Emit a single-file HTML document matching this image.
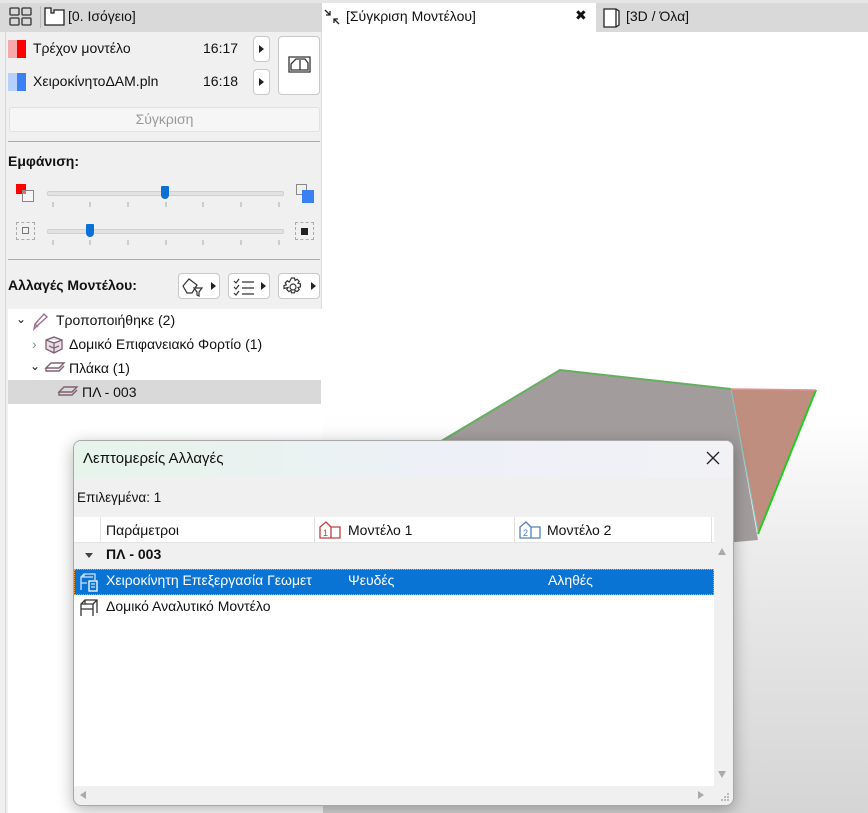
<!DOCTYPE html>
<html><head><meta charset="utf-8"><style>
*{box-sizing:border-box;margin:0;padding:0}
body{width:868px;height:813px;overflow:hidden;background:#fff;font-family:"Segoe UI","Liberation Sans","DejaVu Sans",sans-serif;font-size:14px;color:#111;position:relative}
.abs{position:absolute;white-space:nowrap}
.btn{position:absolute;background:#fff;border:1px solid #c8c8c8;border-radius:4px}
.tri{width:0;height:0;border-top:4px solid transparent;border-bottom:4px solid transparent;border-left:5px solid #222;position:absolute}
</style></head><body>
<div class="abs" style="left:0;top:0;width:868px;height:3px;background:#e6e6e6"></div>
<div class="abs" style="left:0;top:3px;width:322px;height:29px;background:#d9d9d9"></div>
<svg class="abs" style="left:9px;top:7px" width="24" height="20"><g fill="none" stroke="#333" stroke-width="1.3"><rect x="1" y="1" width="9" height="7" rx="1"/><rect x="13" y="1" width="9" height="7" rx="1"/><rect x="1" y="11" width="9" height="7" rx="1"/><rect x="13" y="11" width="9" height="7" rx="1"/></g></svg>
<div class="abs" style="left:40px;top:6px;width:1px;height:22px;background:#bbb"></div>
<svg class="abs" style="left:44px;top:7px" width="22" height="20"><path d="M1 1h6v5h3V3h10v15H1z" fill="#fff" stroke="#222" stroke-width="1.3"/></svg>
<div class="abs" style="left:68px;top:8px">[0. Ισόγειο]</div>
<div class="abs" style="left:322px;top:3px;width:274px;height:29px;background:#fff"></div>
<svg class="abs" style="left:323px;top:8px" width="18" height="18"><path d="M2 2l5 5M7 3v4H3M16 16l-5-5M11 15v-4h4" fill="none" stroke="#222" stroke-width="1.3"/></svg>
<div class="abs" style="left:346px;top:8px">[Σύγκριση Μοντέλου]</div>
<div class="abs" style="left:575px;top:7px;font-size:14px;font-weight:bold">✖</div>
<div class="abs" style="left:596px;top:3px;width:272px;height:29px;background:#d9d9d9"></div>
<svg class="abs" style="left:602px;top:7px" width="20" height="22"><path d="M2 2h12l3 2v14l-3 2H2z M14 2v18" fill="#fff" stroke="#222" stroke-width="1.3"/></svg>
<div class="abs" style="left:626px;top:8px">[3D / Όλα]</div>
<div class="abs" style="left:0;top:32px;width:322px;height:781px;background:#f0f0f0;border-right:1px solid #ddd"></div>
<div class="abs" style="left:5px;top:32px;width:1px;height:781px;background:#d6d6d6"></div>
<div class="abs" style="left:8px;top:40px;width:9px;height:18px;background:#f7a8a8"></div>
<div class="abs" style="left:17px;top:40px;width:9px;height:18px;background:#f00"></div>
<div class="abs" style="left:33px;top:40px">Τρέχον μοντέλο</div>
<div class="abs" style="left:203px;top:40px">16:17</div>
<div class="btn" style="left:253px;top:36px;width:17px;height:26px"><div class="tri" style="left:5px;top:8px"></div></div>
<div class="abs" style="left:8px;top:73px;width:9px;height:18px;background:#b5d0fb"></div>
<div class="abs" style="left:17px;top:73px;width:9px;height:18px;background:#3a7ff5"></div>
<div class="abs" style="left:33px;top:73px">ΧειροκίνητοΔΑΜ.pln</div>
<div class="abs" style="left:203px;top:73px">16:18</div>
<div class="btn" style="left:253px;top:69px;width:17px;height:26px"><div class="tri" style="left:5px;top:8px"></div></div>
<div class="btn" style="left:278px;top:36px;width:42px;height:59px"><svg style="position:absolute;left:9px;top:19px" width="24" height="18"><path d="M1 1h21v15H1z M3 14V8l5-5h9l3 4v7z M12 4v10" fill="none" stroke="#333" stroke-width="1.3"/></svg></div>
<div class="abs" style="left:9px;top:107px;width:311px;height:25px;background:#f6f6f6;border:1px solid #e2e2e2;border-radius:3px;color:#999;text-align:center;line-height:23px">Σύγκριση</div>
<div class="abs" style="left:8px;top:141px;width:312px;height:1px;background:#aaa"></div>
<div class="abs" style="left:8px;top:153px;font-weight:bold">Εμφάνιση:</div>
<div class="abs" style="left:16px;top:184px;width:10px;height:10px;background:#f00"></div>
<div class="abs" style="left:22px;top:190px;width:12px;height:12px;border:1.5px solid #888;background:rgba(255,255,255,.4)"></div>
<div class="abs" style="left:47px;top:191px;width:237px;height:5px;background:#e2e2e2;border:1px solid #d0d0d0;border-radius:2px"></div>
<div class="abs" style="left:161px;top:186px;width:8px;height:13px;background:#0a6fd6;border-radius:1px 1px 4px 4px"></div>
<div class="abs" style="left:296px;top:184px;width:11px;height:11px;border:1.5px solid #888"></div>
<div class="abs" style="left:302px;top:190px;width:12px;height:13px;background:#3a7ff5"></div>
<div class="abs" style="left:16px;top:222px;width:19px;height:18px;border:1px dashed #aaa"></div>
<div class="abs" style="left:22px;top:227px;width:7px;height:7px;border:1.5px solid #777"></div>
<div class="abs" style="left:47px;top:229px;width:237px;height:5px;background:#e2e2e2;border:1px solid #d0d0d0;border-radius:2px"></div>
<div class="abs" style="left:86px;top:224px;width:8px;height:13px;background:#0a6fd6;border-radius:1px 1px 4px 4px"></div>
<div class="abs" style="left:295px;top:222px;width:19px;height:18px;border:1px dashed #aaa"></div>
<div class="abs" style="left:301px;top:228px;width:7px;height:7px;background:#222"></div>
<svg class="abs" style="left:47px;top:202px" width="240" height="44"><g stroke="#aaa" stroke-width="1"><path d="M6 0v5M43 0v5M81 0v5M119 0v5M156 0v5M194 0v5M232 0v5M6 38v5M43 38v5M81 38v5M119 38v5M156 38v5M194 38v5M232 38v5"/></g></svg>
<div class="abs" style="left:8px;top:259px;width:312px;height:1px;background:#aaa"></div>
<div class="abs" style="left:8px;top:277px;font-weight:bold">Αλλαγές Μοντέλου:</div>
<div class="btn" style="left:178px;top:273px;width:42px;height:26px"><svg style="position:absolute;left:2px;top:3px" width="24" height="20"><path d="M2 9l6-7 8 6-5 8H6z M13 11h8l-3 4v4l-2-1v-3z" fill="none" stroke="#333" stroke-width="1.2"/></svg><div class="tri" style="left:32px;top:8px"></div></div>
<div class="btn" style="left:228px;top:273px;width:42px;height:26px"><svg style="position:absolute;left:3px;top:3px" width="24" height="20"><path d="M2 4l2 2 3-4M2 10l2 2 3-4M2 16l2 2 3-4M10 5h12M10 11h12M10 17h12" fill="none" stroke="#333" stroke-width="1.2"/></svg><div class="tri" style="left:32px;top:8px"></div></div>
<div class="btn" style="left:278px;top:273px;width:42px;height:26px"><svg style="position:absolute;left:4px;top:3px" width="20" height="20"><circle cx="10" cy="10" r="3" fill="none" stroke="#333" stroke-width="1.2"/><path d="M8.5 1h3l.6 2.4 2-1.2 2.1 2.1-1.2 2 2.4.6v3l-2.4.6 1.2 2-2.1 2.1-2-1.2-.6 2.4h-3l-.6-2.4-2 1.2-2.1-2.1 1.2-2L1 11.5v-3l2.4-.6-1.2-2 2.1-2.1 2 1.2z" fill="none" stroke="#333" stroke-width="1.2"/></svg><div class="tri" style="left:32px;top:8px"></div></div>
<div class="abs" style="left:8px;top:309px;width:314px;height:504px;background:#fff"></div>
<div class="abs" style="left:8px;top:380px;width:313px;height:24px;background:#d9d9d9"></div>
<div class="abs" style="left:16px;top:312px;font-size:12px">⌄</div>
<svg class="abs" style="left:31px;top:312px" width="20" height="20"><path d="M3 17l1-5 9-10 3 3-10 9z M4 12l3 3" fill="none" stroke="#a07090" stroke-width="1.4"/></svg>
<div class="abs" style="left:56px;top:312px">Τροποποιήθηκε (2)</div>
<div class="abs" style="left:32px;top:336px;color:#888">›</div>
<svg class="abs" style="left:43px;top:335px" width="22" height="20"><path d="M3 5l8-3 8 3v9l-8 4-8-4z M3 5l8 3 8-3 M11 8v10 M6 11l5 2 5-2" fill="#e8e0e8" stroke="#806070" stroke-width="1.3"/></svg>
<div class="abs" style="left:69px;top:336px">Δομικό Επιφανειακό Φορτίο (1)</div>
<div class="abs" style="left:30px;top:359px;font-size:12px">⌄</div>
<svg class="abs" style="left:44px;top:361px" width="22" height="14"><path d="M2 7l5-5h13l-5 5z M2 7v3h13l5-5" fill="none" stroke="#806070" stroke-width="1.4"/></svg>
<div class="abs" style="left:69px;top:360px">Πλάκα (1)</div>
<svg class="abs" style="left:57px;top:385px" width="22" height="14"><path d="M2 7l5-5h13l-5 5z M2 7v3h13l5-5" fill="none" stroke="#806070" stroke-width="1.4"/></svg>
<div class="abs" style="left:82px;top:384px">ΠΛ - 003</div>
<div class="abs" style="left:323px;top:370px;width:545px;height:443px;background:linear-gradient(#fff 0%,#fff 10%,#ececec 40%,#d5d5d5 100%)"></div>
<svg class="abs" style="left:323px;top:32px" width="545" height="781"><polygon points="237,338 408,357 435,508 300,520 100,420" fill="#a29c9c"/><polygon points="408,357 493,358 435,500" fill="#c08e7e"/><polyline points="100,420 237,338 408,357" fill="none" stroke="#64b060" stroke-width="2"/><polyline points="493,358 435,502" fill="none" stroke="#22cc22" stroke-width="2"/><line x1="408" y1="357" x2="435" y2="500" stroke="#80c8c0" stroke-width="1"/><line x1="408" y1="357" x2="493" y2="358" stroke="#e89090" stroke-width="1.5"/></svg>
<div class="abs" style="left:73px;top:440px;width:661px;height:366px;background:#f0f0f0;border:1px solid #a8a8a8;border-radius:8px;box-shadow:0 4px 16px rgba(0,0,0,.3);overflow:hidden">
 <div class="abs" style="left:0;top:0;width:661px;height:36px;background:linear-gradient(90deg,#e6f4ea,#eef0f8 60%,#f2f2f6)"></div>
 <div class="abs" style="left:9px;top:9px;font-size:15px">Λεπτομερείς Αλλαγές</div>
 <svg class="abs" style="left:632px;top:10px" width="14" height="14"><path d="M1 1l12 12M13 1L1 13" stroke="#222" stroke-width="1.3"/></svg>
 <div class="abs" style="left:3px;top:49px;font-size:13.5px">Επιλεγμένα: 1</div>
 <div class="abs" style="left:0;top:76px;width:640px;height:269px;background:#fff"></div>
 <div class="abs" style="left:0;top:76px;width:640px;height:26px;background:#fff;border-bottom:1px solid #e4e4e4"></div>
 <div class="abs" style="left:26px;top:76px;width:1px;height:26px;background:#e6e6e6"></div>
 <div class="abs" style="left:240px;top:76px;width:1px;height:26px;background:#e0e0e0"></div>
 <div class="abs" style="left:440px;top:76px;width:1px;height:26px;background:#e0e0e0"></div>
 <div class="abs" style="left:637px;top:76px;width:1px;height:26px;background:#e0e0e0"></div>
 <div class="abs" style="left:32px;top:81px">Παράμετροι</div>
 <svg class="abs" style="left:244px;top:79px" width="24" height="20"><path d="M2 18V7l6-5 5 5h9v11z M13 7v11" fill="none" stroke="#c04040" stroke-width="1.3"/><text x="5" y="16" font-size="9" fill="#c04040" font-family="Liberation Sans">1</text></svg>
 <div class="abs" style="left:274px;top:81px">Μοντέλο 1</div>
 <svg class="abs" style="left:444px;top:79px" width="24" height="20"><path d="M2 18V7l6-5 5 5h9v11z M13 7v11" fill="none" stroke="#5080c0" stroke-width="1.3"/><text x="5" y="16" font-size="9" fill="#5080c0" font-family="Liberation Sans">2</text></svg>
 <div class="abs" style="left:473px;top:81px">Μοντέλο 2</div>
 <div class="abs" style="left:0;top:102px;width:640px;height:26px;background:#f0f0f0"></div>
 <div class="abs" style="left:11px;top:112px;width:0;height:0;border-left:4px solid transparent;border-right:4px solid transparent;border-top:5px solid #444"></div>
 <div class="abs" style="left:32px;top:105px;font-weight:bold">ΠΛ - 003</div>
 <div class="abs" style="left:0;top:128px;width:640px;height:26px;background:#0a74d4;border:1px dotted #f0a040"></div>
 <svg class="abs" style="left:5px;top:131px" width="20" height="20"><path d="M2 18V5l3-3h11v6 M2 5h12 M5 2v3 M2 11h6" fill="none" stroke="#fff" stroke-width="1.3" opacity=".8"/><rect x="10" y="9" width="8" height="10" fill="none" stroke="#fff" stroke-width="1.3"/><path d="M12 12h4M12 15h4" stroke="#fff"/></svg>
 <div class="abs" style="left:32px;top:131px;color:#fff">Χειροκίνητη Επεξεργασία Γεωμετ</div>
 <div class="abs" style="left:274px;top:131px;color:#fff">Ψευδές</div>
 <div class="abs" style="left:474px;top:131px;color:#fff">Αληθές</div>
 <svg class="abs" style="left:5px;top:157px" width="20" height="20"><path d="M2 18V6l4-4h12v13 M2 6h12 M14 6v12 M2 11h12 M6 2v4 M18 2l-4 4" fill="none" stroke="#333" stroke-width="1.3"/></svg>
 <div class="abs" style="left:32px;top:157px">Δομικό Αναλυτικό Μοντέλο</div>
 <div class="abs" style="left:644px;top:107px;width:0;height:0;border-left:4px solid transparent;border-right:4px solid transparent;border-bottom:7px solid #aaa"></div>
 <div class="abs" style="left:644px;top:330px;width:0;height:0;border-left:4px solid transparent;border-right:4px solid transparent;border-top:7px solid #aaa"></div>
 <div class="abs" style="left:6px;top:350px;width:0;height:0;border-top:4px solid transparent;border-bottom:4px solid transparent;border-right:6px solid #aaa"></div>
 <div class="abs" style="left:624px;top:350px;width:0;height:0;border-top:4px solid transparent;border-bottom:4px solid transparent;border-left:6px solid #aaa"></div>
 <svg class="abs" style="left:647px;top:352px" width="10" height="10"><g fill="#bbb"><rect x="6" y="0" width="2" height="2"/><rect x="3" y="3" width="2" height="2"/><rect x="6" y="3" width="2" height="2"/><rect x="0" y="6" width="2" height="2"/><rect x="3" y="6" width="2" height="2"/><rect x="6" y="6" width="2" height="2"/></g></svg>
</div>
</body></html>
